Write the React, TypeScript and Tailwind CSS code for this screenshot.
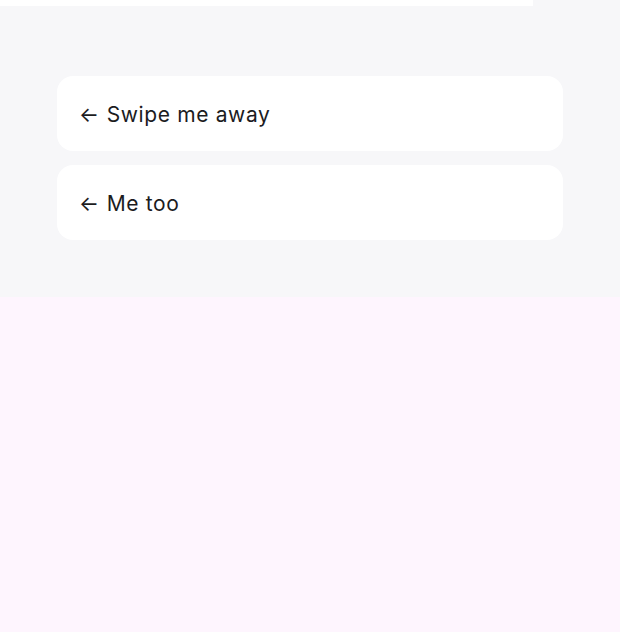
import React from "react";

const items = ["Swipe me away", "Me too"];

export default function App() {
  return (
    <div
      className="min-h-[632px] w-full bg-[#fef5fe] flex flex-col"
      style={{ fontFamily: "Inter, 'Noto Sans', sans-serif" }}
    >
      <div className="bg-[#f7f7f9] h-[297px] flex flex-col">
        <div className="h-[6px] w-[533px] bg-white" />
        <div className="flex flex-col gap-[14px] px-[57px] pt-[70px]">
          {items.map((label) => (
            <div
              key={label}
              className="h-[75px] rounded-2xl bg-white flex items-center pl-[22px] pt-[2px] text-[21px] text-[#1c1c1e] tracking-[0.03em]"
            >
              <span className="mr-[7px]">←</span>
              {label}
            </div>
          ))}
        </div>
      </div>
    </div>
  );
}
